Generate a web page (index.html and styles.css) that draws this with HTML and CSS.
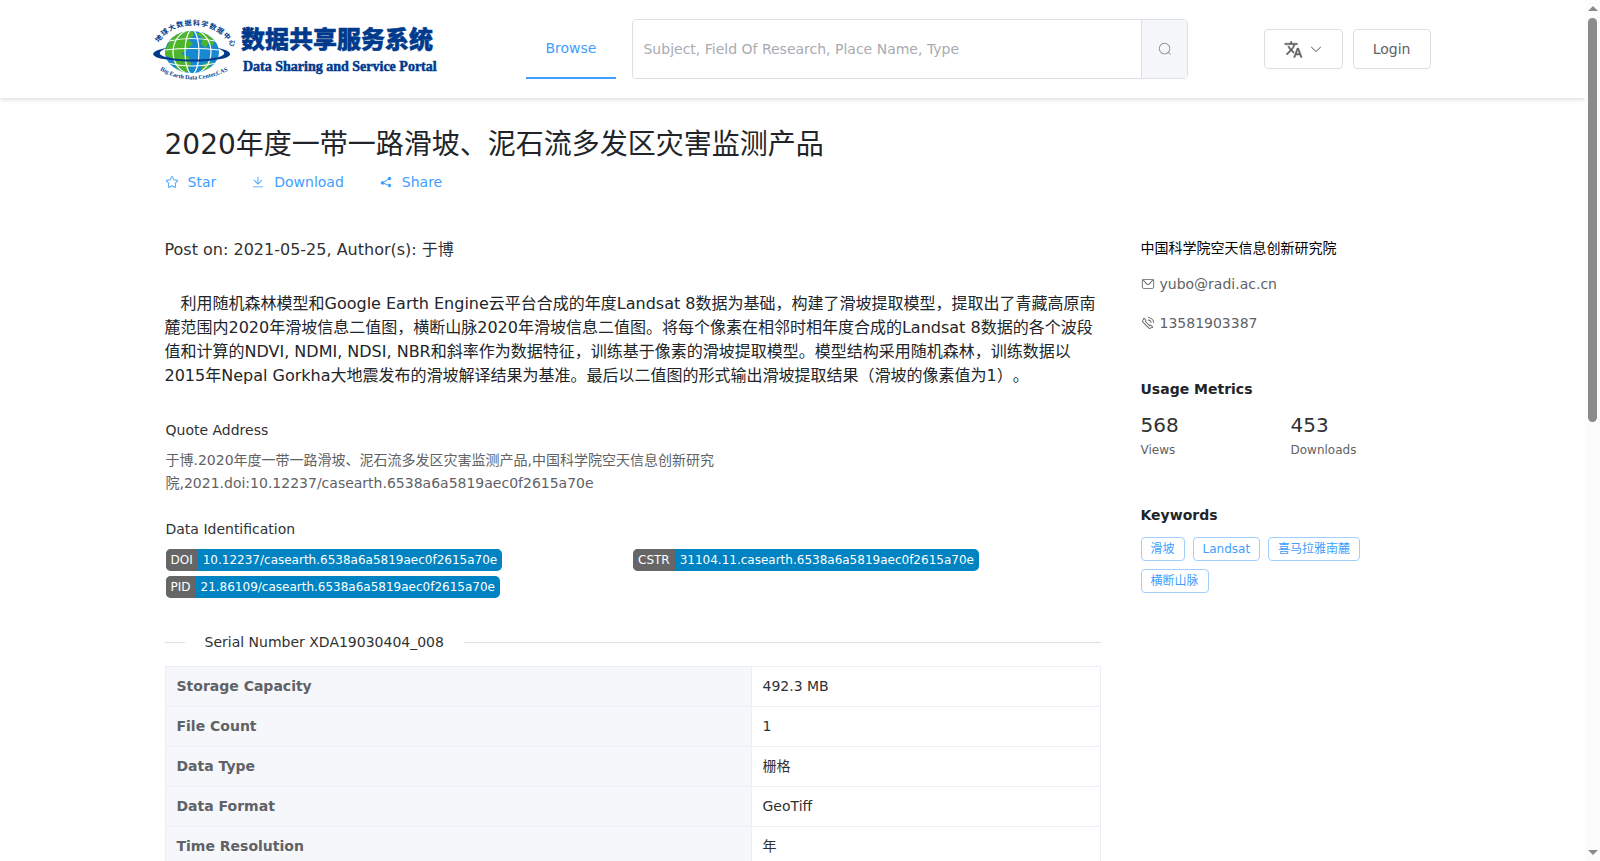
FILE: index.html
```html
<!DOCTYPE html>
<html lang="zh-CN">
<head>
  <meta charset="utf-8">
  <title>2020年度一带一路滑坡、泥石流多发区灾害监测产品</title>
  <link rel="stylesheet" href="styles.css">
</head>
<body>
  <div class="page">
    <header class="header">
      <div class="header-inner">
        <a class="logo" href="#">
          <svg width="290" height="66" viewBox="0 0 290 66">
            <defs>
              <path id="arc-top" d="M6 27 C18 3 64 3 78 30" />
              <path id="arc-bottom" d="M7 54 Q39 74 80 52" />
              <clipPath id="globe"><ellipse cx="39" cy="36" rx="27" ry="21" /></clipPath>
            </defs>
            <g clip-path="url(#globe)">
              <rect x="10" y="14" width="58" height="45" fill="#1689cf" />
              <path d="M12 34 L18 22 L27 15 L39 14 L41 19 L36 24 L40 28 L34 33 L28 38 L36 41 L38 48 L33 57 L24 53 L20 44 L12 39 Z" fill="#4db52b" />
              <path d="M43 17 L53 17 L61 24 L60 30 L55 27 L53 32 L48 28 L50 23 Z M50 48 L59 46 L55 53 L48 55 Z" fill="#4db52b" />
              <g fill="none" stroke="#fff" stroke-width="1.2">
                <ellipse cx="39" cy="36" rx="19" ry="22" />
                <ellipse cx="39" cy="36" rx="7" ry="22" />
                <path d="M16 25 Q39 20 62 25 M12 34 Q39 31 66 34 M14 47 Q39 53 64 47" />
              </g>
            </g>
            <path d="M14 32 C-5 35 -5 42 18 44 C32 46 49 46 61 44 C82 42 82 35 64 32 C75 36 73 40 61 42 C48 44 30 44 18 42 C5 40 3 36 14 32 Z" fill="#003a8c" />
            <text class="logo-arc"><textPath href="#arc-top">地球大数据科学数据中心</textPath></text>
            <text class="logo-arc-en"><textPath href="#arc-bottom">Big Earth Data Center,CAS</textPath></text>
            <text class="logo-cn" x="88" y="32">数据共享服务系统</text>
            <text class="logo-en" x="90" y="55">Data Sharing and Service Portal</text>
          </svg>
        </a>
        <a class="nav-item" href="#">Browse</a>
        <form class="search">
          <input type="text" aria-label="Search" placeholder="Subject, Field Of Research, Place Name, Type">
          <button type="button" aria-label="Search">
            <svg class="icon" viewBox="0 0 1024 1024"><path d="m795.904 750.72 124.992 124.928a32 32 0 0 1-45.248 45.248L750.656 795.904a416 416 0 1 1 45.248-45.248zM480 832a352 352 0 1 0 0-704 352 352 0 0 0 0 704z"/></svg>
          </button>
        </form>
        <div class="actions">
          <button type="button" class="btn" aria-label="Language">
            <svg class="icon-lang" viewBox="0 0 24 24"><path d="M12.87 15.07l-2.54-2.51.03-.03A17.52 17.52 0 0 0 14.07 6H17V4h-7V2H8v2H1v1.99h11.17C11.5 7.92 10.44 9.75 9 11.35 8.07 10.32 7.3 9.19 6.69 8h-2c.73 1.63 1.73 3.17 2.98 4.56l-5.09 5.02L4 19l5-5 3.11 3.11.76-2.04zM18.5 10h-2L12 22h2l1.12-3h4.75L21 22h2l-4.5-12zm-2.62 7l1.62-4.33L19.12 17h-3.24z"/></svg>
            <svg class="icon" viewBox="0 0 1024 1024"><path d="M831.872 340.864 512 652.672 192.128 340.864a30.592 30.592 0 0 0-42.752 0 29.12 29.12 0 0 0 0 41.6L489.664 714.24a32 32 0 0 0 44.672 0l340.288-331.712a29.12 29.12 0 0 0 0-41.728 30.592 30.592 0 0 0-42.752 0z"/></svg>
          </button>
          <button type="button" class="btn">Login</button>
        </div>
      </div>
    </header>

    <div class="container">
      <h1>2020年度一带一路滑坡、泥石流多发区灾害监测产品</h1>
      <div class="links">
        <a href="#"><svg class="icon" viewBox="0 0 1024 1024"><path d="m512 747.84 228.16 119.936a6.4 6.4 0 0 0 9.28-6.72l-43.52-254.08 184.512-179.904a6.4 6.4 0 0 0-3.52-10.88l-255.104-37.12L517.76 147.904a6.4 6.4 0 0 0-11.52 0L392.192 379.072l-255.104 37.12a6.4 6.4 0 0 0-3.52 10.88L318.08 606.976l-43.584 254.08a6.4 6.4 0 0 0 9.28 6.72zM313.6 924.48a70.4 70.4 0 0 1-102.144-74.24l37.888-220.928L88.96 472.96A70.4 70.4 0 0 1 128 352.896l221.76-32.256 99.2-200.96a70.4 70.4 0 0 1 126.208 0l99.2 200.96 221.824 32.256a70.4 70.4 0 0 1 39.04 120.064L774.72 629.376l37.888 220.928a70.4 70.4 0 0 1-102.144 74.24L512 820.096l-198.4 104.32z"/></svg>Star</a>
        <a href="#"><svg class="icon" viewBox="0 0 1024 1024"><path d="M160 832h704a32 32 0 1 1 0 64H160a32 32 0 1 1 0-64zm384-253.696 236.288-236.352 45.248 45.248L508.8 704 192 387.2l45.248-45.248L480 584.704V128h64v450.304z"/></svg>Download</a>
        <a href="#"><svg class="icon" viewBox="0 0 1024 1024"><path d="m679.872 348.8-301.76 188.608a127.808 127.808 0 0 1 5.12 52.16l279.936 104.96a128 128 0 1 1-22.464 59.904l-279.872-104.96a128 128 0 1 1-16.64-166.272l301.696-188.608a128 128 0 1 1 33.92 54.272z"/></svg>Share</a>
      </div>

      <div class="columns">
        <main class="main">
          <div class="post">Post on: 2021-05-25, Author(s): 于博</div>
          <p class="summary">利用随机森林模型和Google Earth Engine云平台合成的年度Landsat 8数据为基础，构建了滑坡提取模型，提取出了青藏高原南麓范围内2020年滑坡信息二值图，横断山脉2020年滑坡信息二值图。将每个像素在相邻时相年度合成的Landsat 8数据的各个波段值和计算的NDVI, NDMI, NDSI, NBR和斜率作为数据特征，训练基于像素的滑坡提取模型。模型结构采用随机森林，训练数据以2015年Nepal Gorkha大地震发布的滑坡解译结果为基准。最后以二值图的形式输出滑坡提取结果（滑坡的像素值为1）。</p>

          <h2>Quote Address</h2>
          <p class="quote">于博.2020年度一带一路滑坡、泥石流多发区灾害监测产品,中国科学院空天信息创新研究院,2021.doi:10.12237/casearth.6538a6a5819aec0f2615a70e</p>

          <h2>Data Identification</h2>
          <div class="badges">
            <div class="badge"><span>DOI</span><b>10.12237/casearth.6538a6a5819aec0f2615a70e</b></div>
            <div class="badge"><span>CSTR</span><b>31104.11.casearth.6538a6a5819aec0f2615a70e</b></div>
            <div class="badge"><span>PID</span><b>21.86109/casearth.6538a6a5819aec0f2615a70e</b></div>
          </div>

          <div class="divider">Serial Number XDA19030404_008</div>
          <table class="info">
            <tr><th scope="row">Storage Capacity</th><td>492.3 MB</td></tr>
            <tr><th scope="row">File Count</th><td>1</td></tr>
            <tr><th scope="row">Data Type</th><td>栅格</td></tr>
            <tr><th scope="row">Data Format</th><td>GeoTiff</td></tr>
            <tr><th scope="row">Time Resolution</th><td>年</td></tr>
          </table>
        </main>

        <aside class="side">
          <div class="org">中国科学院空天信息创新研究院</div>
          <div class="contact"><svg class="icon" viewBox="0 0 1024 1024"><path d="M128 224v512a64 64 0 0 0 64 64h640a64 64 0 0 0 64-64V224H128zm0-64h768a64 64 0 0 1 64 64v512a128 128 0 0 1-128 128H192A128 128 0 0 1 64 736V224a64 64 0 0 1 64-64z"/><path d="M904 224 656.512 506.88a192 192 0 0 1-289.024 0L120 224h784zm-698.944 0 210.56 240.704a128 128 0 0 0 192.704 0L818.944 224H205.056z"/></svg>yubo@radi.ac.cn</div>
          <div class="contact"><svg class="icon" viewBox="0 0 1024 1024"><path d="M79.36 432.256 591.744 944.64a32 32 0 0 0 35.2 6.784l253.44-108.544a32 32 0 0 0 9.984-52.032l-153.856-153.92a32 32 0 0 0-36.928-6.016l-69.888 34.944L358.08 394.24l35.008-69.888a32 32 0 0 0-5.952-36.928L233.152 133.568a32 32 0 0 0-52.032 10.048L72.512 397.056a32 32 0 0 0 6.784 35.2zm60.48-29.952 81.536-190.08L325.568 316.48l-24.64 49.216-20.608 41.216 32.576 32.64 271.552 271.552 32.64 32.64 41.216-20.672 49.28-24.576 104.192 104.128-190.08 81.472L139.84 402.304zM512 320v-64a256 256 0 0 1 256 256h-64a192 192 0 0 0-192-192zm0-192V64a448 448 0 0 1 448 448h-64a384 384 0 0 0-384-384z"/></svg>13581903387</div>

          <h3>Usage Metrics</h3>
          <div class="metrics">
            <div><strong>568</strong><span>Views</span></div>
            <div><strong>453</strong><span>Downloads</span></div>
          </div>

          <h3>Keywords</h3>
          <div class="tags">
            <span class="tag">滑坡</span>
            <span class="tag">Landsat</span>
            <span class="tag">喜马拉雅南麓</span>
            <span class="tag">横断山脉</span>
          </div>
        </aside>
      </div>
    </div>
  </div>

  <div class="scrollbar" aria-hidden="true">
    <i class="arrow-up"></i>
    <div class="track"><div class="thumb"></div></div>
    <i class="arrow-down"></i>
  </div>
</body>
</html>
```
FILE: styles.css
```css
* {
  box-sizing: border-box;
}
body {
  margin: 0;
  display: flex;
  height: 100vh;
  overflow: hidden;
  font-family: "DejaVu Sans", "Noto Sans CJK SC", sans-serif;
  font-size: 14px;
  line-height: 24px;
  text-spacing-trim: space-all;
  color: #303133;
  background: #fff;
}
a {
  color: #409eff;
  text-decoration: none;
}
button, input {
  font: inherit;
}
.page {
  flex: 1;
  min-width: 0;
  overflow: hidden;
}
.icon {
  width: 14px;
  height: 14px;
  fill: currentColor;
  flex: none;
}

/* header */
.header {
  height: 98px;
  box-shadow: 0 2px 4px rgba(0, 0, 0, .12);
}
.header-inner {
  display: flex;
  align-items: center;
  height: 98px;
  max-width: 1320px;
  margin: 0 auto;
  padding: 0 22px 0 20px;
}
.logo {
  height: 66px;
  margin-right: 83px;
}
.logo svg {
  overflow: visible;
}
.logo-cn {
  font: 900 24px "Noto Sans CJK SC", sans-serif;
  fill: #003a8c;
  stroke: #003a8c;
  stroke-width: .5px;
}
.logo-en {
  font: bold 14px "Liberation Serif", serif;
  fill: #003a8c;
  stroke: #003a8c;
  stroke-width: .5px;
}
.logo-arc {
  font: bold 7px "Noto Sans CJK SC", sans-serif;
  letter-spacing: 1px;
  fill: #003a8c;
}
.logo-arc-en {
  font: bold 6px "Liberation Serif", serif;
  fill: #003a8c;
}
.nav-item {
  height: 60px;
  padding: 0 20px;
  line-height: 58px;
  border-bottom: 2px solid #409eff;
}
.search {
  display: flex;
  flex: 1;
  max-width: 556px;
  height: 60px;
  margin-left: 16px;
  border: 1px solid #dcdfe6;
  border-radius: 4px;
}
.search input {
  flex: 1;
  min-width: 0;
  padding: 0 10px;
  border: 0;
  border-radius: 4px;
  outline: 0;
}
.search input::placeholder {
  color: #a8abb2;
}
.search button {
  width: 46px;
  padding: 4px 0 0;
  border: 0;
  border-left: 1px solid #dcdfe6;
  background: #f5f7fa;
  color: #909399;
}
.actions {
  display: flex;
  gap: 10px;
  margin-left: auto;
}
.btn {
  display: flex;
  align-items: center;
  gap: 6px;
  height: 40px;
  padding: 0 19px;
  border: 1px solid #dcdfe6;
  border-radius: 4px;
  background: #fff;
  color: #606266;
}
.icon-lang {
  width: 19px;
  height: 19px;
  fill: currentColor;
  stroke: currentColor;
  stroke-width: .5px;
}

/* content */
.container {
  max-width: 1320px;
  margin: 0 auto;
  padding: 29px 32px 0;
}
h1 {
  margin: 0;
  font-size: 28px;
  font-weight: normal;
  line-height: 36px;
  color: #212529;
}
.links {
  display: flex;
  gap: 35px;
  margin-top: 7px;
}
.links a {
  display: flex;
  align-items: center;
  gap: 9px;
}
.columns {
  display: flex;
  gap: 40px;
  margin-top: 42px;
}
.main {
  flex: 1;
  min-width: 0;
  max-width: 936px;
  padding-top: 2px;
}
.post {
  font-size: 16px;
}
.summary {
  margin: 30px 0 0;
  font-size: 16px;
  text-indent: 16px;
  color: #212529;
}
h2 {
  margin: 30px 0 7px;
  padding-left: 1px;
  font-size: 14px;
  font-weight: normal;
}
.quote {
  width: 60%;
  margin: 0;
  padding-left: 1px;
  line-height: 23px;
  color: #606266;
}
.quote + h2 {
  margin: 22px 0 8px;
}
.badges {
  display: grid;
  grid-template-columns: 1fr 1fr;
  gap: 5px 0;
  padding-left: 1px;
}
.badge {
  display: flex;
  justify-self: start;
  height: 22px;
  font-size: 12px;
  line-height: 22px;
  color: #fff;
  border-radius: 5px;
  overflow: hidden;
  background: #0083c2;
}
.badge span {
  padding: 0 5px;
  background: #666;
}
.badge b {
  padding: 0 5px;
  font-weight: normal;
}
.divider {
  display: flex;
  align-items: center;
  gap: 20px;
  margin: 32px 0 12px;
}
.divider::before,
.divider::after {
  content: "";
  height: 1px;
  background: #dcdfe6;
}
.divider::before {
  width: 20px;
}
.divider::after {
  flex: 1;
}
.info {
  width: 100%;
  border-collapse: collapse;
  table-layout: fixed;
}
.info th,
.info td {
  height: 40px;
  padding: 0 11px;
  border: 1px solid #ebeef5;
  text-align: left;
  line-height: 23px;
}
.info th {
  width: 586px;
  color: #606266;
  background: #f5f7fa;
}

/* side column */
.side {
  width: 280px;
}
.org {
  margin-bottom: 12px;
  color: #000;
}
.contact {
  display: flex;
  align-items: center;
  gap: 5px;
  margin-bottom: 15px;
  color: #606266;
}
h3 {
  margin: 42px 0 10px;
  font-size: 14px;
  color: #212529;
}
.metrics {
  display: flex;
}
.metrics div {
  flex: none;
  width: 150px;
}
.metrics div:last-child {
  width: 120px;
}
.metrics strong {
  display: block;
  font-size: 20px;
  font-weight: normal;
  line-height: 28px;
}
.metrics span {
  display: block;
  font-size: 12px;
  line-height: 22px;
  color: #606266;
}
.tags {
  display: flex;
  flex-wrap: wrap;
  gap: 8px;
}
.tag {
  height: 24px;
  padding: 0 9px;
  font-size: 12px;
  line-height: 22px;
  color: #409eff;
  border: 1px solid #a0cfff;
  border-radius: 4px;
}

/* scrollbar */
.scrollbar {
  display: flex;
  flex-direction: column;
  align-items: center;
  width: 15px;
  padding: 6px 0;
  background: #fcfcfc;
}
.arrow-up,
.arrow-down {
  border: 5px solid transparent;
}
.arrow-up {
  border-top: 0;
  border-bottom-color: #8b8b8b;
}
.arrow-down {
  border-bottom: 0;
  border-top-color: #8b8b8b;
}
.track {
  flex: 1;
  width: 9px;
  padding: 7px 0;
}
.thumb {
  height: 49%;
  border-radius: 5px;
  background: #8b8b8b;
}
```
